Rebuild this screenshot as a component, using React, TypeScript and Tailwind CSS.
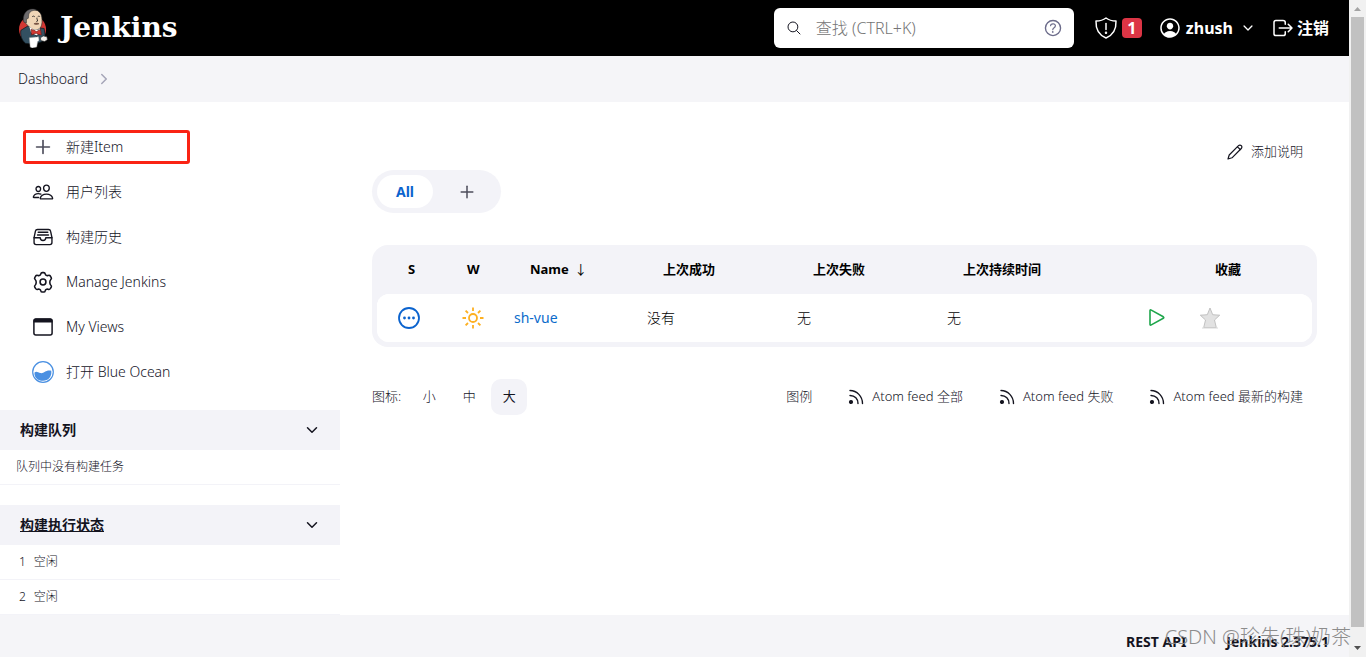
import type { ReactNode } from "react";
import { Plus } from "lucide-react";
import {
  IoChevronDown,
  IoChevronForward,
  IoFileTrayFullOutline,
  IoHelpCircleOutline,
  IoLogOutOutline,
  IoPeopleOutline,
  IoPersonCircleOutline,
  IoSearchOutline,
} from "react-icons/io5";

function JenkinsLogo() {
  return (
    <svg viewBox="1 0 32 43" className="h-10 w-[30px]" aria-hidden="true">
      <circle cx="16.5" cy="23" r="14.5" fill="#d33833" />
      <path d="M4 24l8-5 9 2 8 1 1 8-3 6-9 3-9-1c-4-3-6-9-5-14z" fill="#335061" stroke="#10191f" strokeWidth="0.8" />
      <path d="M7.5 14C6 7 10 2 16 1.500c7 0 10 4 10.500 9 .5 5 .5 9-3 12-3 2-7 1-9-1-2.500-2-5-4-7-7.500z" fill="#f0d6b7" stroke="#2b2b2b" strokeWidth="0.7" />
      <path d="M7 15C5.500 8 9 1.500 16 1c2.500 0 4 .5 5 1.500-4-.5-7.500 1-8.500 4L12 11l-2 1v4z" fill="#6d6b6d" stroke="#222" strokeWidth="0.5" />
      <path d="M16 9.500c1-1 2-1 3 0M22 9.500c1-1 2-1 2.500 0M21 10.500l1 3.500-1.500.5" fill="none" stroke="#222" strokeWidth="0.9" />
      <path d="M18 17c1.500-1 4-1 5.500 0-1.500.8-4 1.200-5.500 0z" fill="#8a5a44" stroke="#49302a" strokeWidth="0.5" />
      <path d="M13 20l4 3 6 .5 1-2 1 4-4 4-6-3z" fill="#fff" />
      <path d="M15 23l4.500 1.500 1 1 4.500-2.500 1 6-4.500-1-1-1-5 2z" fill="#d33833" stroke="#6d1713" strokeWidth="0.7" />
      <path d="M20 29l2 4" stroke="#10191f" strokeWidth="0.8" />
      <path d="M13 32l10-1 .5 4-1.500 1-1 6-5 1-2-1z" fill="#fff" stroke="#999" strokeWidth="0.5" />
      <path d="M25 32l3-2 4 1 .5 3-3 2-4-1z" fill="#f5f1ec" stroke="#222" strokeWidth="0.6" />
    </svg>
  );
}

function ShieldIcon() {
  return (
    <svg viewBox="0 0 24 24" className="size-6" fill="none" stroke="currentColor" strokeWidth="1.500" strokeLinecap="round" strokeLinejoin="round" aria-hidden="true">
      <path d="M12 2c2.500 1.900 6 3 10 3.100.4 8.900-3.200 14-10 16.900C5.200 19.100 1.600 14 2 5.100 6 5 9.500 3.900 12 2z" />
      <path d="M12 7.500v6" />
      <circle cx="12" cy="16.700" r="0.500" fill="currentColor" />
    </svg>
  );
}

function GearIcon() {
  return (
    <svg viewBox="0 0 24 24" className="size-[22px]" fill="none" stroke="currentColor" strokeWidth="1.700" strokeLinejoin="round" aria-hidden="true">
      <path d="M9.600 3.200Q9.900 1.800 11.200 1.800h1.600q1.300 0 1.600 1.400c.3 1.400 1.700 2.200 3.100 1.700q1.700-.6 2.500.6l1 1.700q.7 1.200-.6 2.300c-1.300 1.200-1.300 4.600 0 5.800q1.300 1.100.6 2.300l-1 1.700q-.8 1.200-2.500.6c-1.400-.5-2.800.3-3.100 1.700q-.3 1.400-1.600 1.400h-1.600q-1.300 0-1.600-1.400c-.3-1.400-1.700-2.200-3.100-1.700q-1.700.6-2.500-.6l-1-1.700q-.7-1.200.6-2.300c1.300-1.200 1.300-4.600 0-5.800q-1.300-1.100-.6-2.300l1-1.700q.8-1.200 2.500-.6c1.400.5 2.800-.3 3.100-1.700z" />
      <circle cx="12" cy="12" r="3.200" />
    </svg>
  );
}

function WindowIcon() {
  return (
    <svg viewBox="0 0 22 22" className="size-[22px]" aria-hidden="true">
      <rect x="1.900" y="2.900" width="18.200" height="16.200" rx="2" fill="none" stroke="currentColor" strokeWidth="1.500" />
      <path d="M1.500 6.500V5a2.500 2.500 0 0 1 2.500-2.500h14A2.500 2.500 0 0 1 20.500 5v1.500z" fill="currentColor" />
    </svg>
  );
}

function BlueOceanIcon() {
  return (
    <svg viewBox="0 0 22 22" className="size-[22px]" aria-hidden="true">
      <circle cx="11" cy="11" r="10.300" fill="#fff" stroke="#4a90e2" strokeWidth="1.200" />
      <path d="M2.500 11.500c2-1.500 3.500 0 6 .6 4 .6 5.500-4 10.800-2.300.7 6-3 10-8.300 10s-9-3.300-8.500-8.300z" fill="#4a90e2" />
    </svg>
  );
}

function PencilIcon() {
  return (
    <svg viewBox="0 0 16 16" className="size-4" fill="none" stroke="currentColor" strokeWidth="1.200" strokeLinecap="round" strokeLinejoin="round" aria-hidden="true">
      <path d="M1 15l1.200-4L11.500 1.700a1.900 1.900 0 0 1 2.800 2.800L5 13.800z" />
      <path d="M10.500 2.800l2.700 2.700" />
    </svg>
  );
}

function FeedIcon() {
  return (
    <svg viewBox="0 0 16 16" className="size-4" fill="none" stroke="currentColor" strokeWidth="1.400" strokeLinecap="round" aria-hidden="true">
      <path d="M2 1.500C9 1.500 14.500 7.500 14.500 14.500M2 6.500c5 0 8 3.500 8 8" />
      <circle cx="3" cy="13" r="1.400" fill="currentColor" />
    </svg>
  );
}

function PendingIcon() {
  return (
    <svg viewBox="0 0 22 22" className="size-[22px] text-[#0b63ce]" role="img" aria-label="Not built">
      <circle cx="11" cy="11" r="10" fill="none" stroke="currentColor" strokeWidth="1.800" />
      <circle cx="6.500" cy="11" r="1.400" fill="currentColor" />
      <circle cx="11" cy="11" r="1.400" fill="currentColor" />
      <circle cx="15.500" cy="11" r="1.400" fill="currentColor" />
    </svg>
  );
}

function SunIcon() {
  return (
    <svg viewBox="0 0 22 22" className="size-[22px] text-[#fdb022]" fill="none" stroke="currentColor" strokeWidth="1.800" role="img" aria-label="100%">
      <circle cx="11" cy="11" r="4" />
      <path d="M11 .5v3.500M11 18v3.500M.5 11H4M18 11h3.500M3.600 3.600L6 6M16 16l2.400 2.400M3.600 18.400L6 16M16 6l2.400-2.400" />
    </svg>
  );
}

function PlayIcon() {
  return (
    <svg viewBox="0 0 18 20" className="h-5 w-[18px]" fill="none" stroke="currentColor" strokeWidth="1.600" strokeLinejoin="round" aria-hidden="true">
      <path d="M2 2.800v13.400q0 1.400 1.300.7l12-6.600q1-.8 0-1.500L3.300 2.100Q2 1.400 2 2.800z" />
    </svg>
  );
}

function StarIcon() {
  return (
    <svg viewBox="0 0 22 22" className="size-[22px]" aria-hidden="true">
      <path d="M11 1l2.700 6.700 7 .5-5.200 4.800 1.800 7.500H4.700L6.500 13 1.300 8.200l7-.5z" fill="#e2e2e2" stroke="#b5b5b5" strokeWidth="0.800" strokeLinejoin="round" />
      <path d="M3 21h16" stroke="#d8d8d8" />
    </svg>
  );
}

interface Task {
  label: string;
  icon: ReactNode;
  highlighted?: boolean;
}

const TASKS: Task[] = [
  { label: "新建Item", icon: <Plus className="size-[22px] text-[#4d4d5b]" strokeWidth={1.8} />, highlighted: true },
  { label: "用户列表", icon: <IoPeopleOutline className="size-[22px]" /> },
  { label: "构建历史", icon: <IoFileTrayFullOutline className="size-[22px]" /> },
  { label: "Manage Jenkins", icon: <GearIcon /> },
  { label: "My Views", icon: <WindowIcon /> },
  { label: "打开 Blue Ocean", icon: <BlueOceanIcon /> },
];

const FEEDS = ["Atom feed 全部", "Atom feed 失败", "Atom feed 最新的构建"];

function Header() {
  return (
    <header className="flex h-14 items-center bg-black pr-5 pl-[18px] text-white">
      <a href="#" className="flex items-center gap-3">
        <JenkinsLogo />
        <span className="font-['DejaVu_Serif',serif] text-[28px] leading-8 font-bold">Jenkins</span>
      </a>
      <div className="ml-auto flex h-10 w-[300px] items-center rounded-md bg-white pr-2.5 pl-3 text-[#14141f]">
        <IoSearchOutline className="size-4 shrink-0" />
        <input
          type="search"
          aria-label="查找"
          placeholder="查找 (CTRL+K)"
          className="ml-3.5 min-w-0 flex-1 bg-transparent text-base outline-none placeholder:text-[#757575]"
        />
        <a href="#" aria-label="Help" className="text-[#6b6b8a]">
          <IoHelpCircleOutline className="size-[22px]" />
        </a>
      </div>
      <a href="#" className="ml-5 flex items-center gap-1 font-bold">
        <ShieldIcon />
        <span className="flex size-5 items-center justify-center rounded bg-[#dc3545] text-base">1</span>
      </a>
      <a href="#" className="ml-4 flex items-center gap-1 font-bold">
        <IoPersonCircleOutline className="size-6" />
        zhush
      </a>
      <button type="button" aria-label="User menu" className="ml-2">
        <IoChevronDown className="size-3.5" />
      </button>
      <a href="#" className="ml-4 flex items-center gap-0.5 font-bold">
        <IoLogOutOutline className="size-6" />
        注销
      </a>
    </header>
  );
}

function PaneHeader({ title, underlined }: { title: string; underlined?: boolean }) {
  return (
    <div className="flex h-10 items-center justify-between bg-[#f3f3f8] px-5">
      <h2 className="text-sm font-bold">
        {underlined ? <a href="#" className="underline">{title}</a> : title}
      </h2>
      <button type="button" aria-label={title}>
        <IoChevronDown className="size-4" />
      </button>
    </div>
  );
}

function Sidebar() {
  return (
    <aside className="w-[340px] shrink-0 pt-[22px]">
      <nav>
        {TASKS.map((task) => (
          <a key={task.label} href="#" className="relative flex h-[45px] items-center gap-3 pl-8 text-sm">
            <span className="flex w-[22px] justify-center">{task.icon}</span>
            {task.label}
            {task.highlighted && (
              <span className="absolute top-1.5 left-[23px] h-[34px] w-[167px] rounded-[3px] border-3 border-[#fa2314]" />
            )}
          </a>
        ))}
      </nav>
      <section className="mt-4">
        <PaneHeader title="构建队列" />
        <p className="h-[35px] border-b border-[#f3f3f8] pl-4 text-xs leading-[34px]">队列中没有构建任务</p>
      </section>
      <section className="mt-5">
        <PaneHeader title="构建执行状态" underlined />
        <ul>
          {[1, 2].map((n) => (
            <li key={n} className="flex h-[35px] gap-2 border-b border-[#f3f3f8] pl-[19px] text-xs leading-[34px]">
              <span>{n}</span>
              <span>空闲</span>
            </li>
          ))}
        </ul>
      </section>
    </aside>
  );
}

function JobTable() {
  return (
    <div className="mt-8 rounded-2xl bg-[#f3f3f8] px-[5px] pb-[5px]">
      <table className="w-full table-fixed border-separate border-spacing-0 text-left text-sm text-black">
        <colgroup>
          <col className="w-16" />
          <col className="w-[57px]" />
          <col className="w-[133px]" />
          <col className="w-[150px]" />
          <col className="w-[150px]" />
          <col />
          <col className="w-[51px]" />
          <col className="w-[129px]" />
        </colgroup>
        <thead>
          <tr className="h-[49px] text-[13px]">
            <th className="pl-[31px]">S</th>
            <th className="pl-[26px]">W</th>
            <th className="pl-8">
              Name <span className="ml-0.5 font-normal">↓</span>
            </th>
            <th className="pl-8">上次成功</th>
            <th className="pl-8">上次失败</th>
            <th className="pl-8">上次持续时间</th>
            <th />
            <th className="pl-8">收藏</th>
          </tr>
        </thead>
        <tbody>
          <tr className="h-12 bg-white">
            <td className="rounded-l-xl bg-white pl-[21px]"><PendingIcon /></td>
            <td className="pl-[21px]"><SunIcon /></td>
            <td className="pl-4">
              <a href="#" className="font-normal text-[#0b6bcb]">sh-vue</a>
            </td>
            <td className="pl-4">没有</td>
            <td className="pl-4">无</td>
            <td className="pl-4">无</td>
            <td className="pl-4">
              <button type="button" aria-label="Build sh-vue" className="block text-[#1ea64b]">
                <PlayIcon />
              </button>
            </td>
            <td className="rounded-r-xl bg-white pl-4">
              <button type="button" aria-label="收藏 sh-vue" className="block"><StarIcon /></button>
            </td>
          </tr>
        </tbody>
      </table>
    </div>
  );
}

function Main() {
  return (
    <main className="min-w-0 flex-1 px-8 pt-8">
      <div className="flex justify-end">
        <a href="#" className="flex h-9 items-center gap-2 px-3.5 text-[13px]">
          <PencilIcon />
          添加说明
        </a>
      </div>
      <div className="flex h-[43px] w-fit items-center rounded-full bg-[#f3f3f8] p-[5px]">
        <a href="#" className="flex h-[33px] w-14 items-center justify-center rounded-full bg-white text-sm font-bold text-[#0b63ce]">
          All
        </a>
        <a href="#" aria-label="New view" className="flex w-[63px] justify-center pl-1">
          <Plus className="size-5 text-[#4d4d5b]" strokeWidth={1.8} />
        </a>
      </div>
      <JobTable />
      <div className="mt-8 flex h-9 items-center justify-between text-[13px]">
        <div className="flex items-center gap-1">
          <span className="mr-1.5">图标:</span>
          <a href="#" className="flex size-9 items-center justify-center">小</a>
          <a href="#" className="flex size-9 items-center justify-center">中</a>
          <span className="flex size-9 items-center justify-center rounded-[10px] bg-[#f3f3f8] font-normal">大</span>
        </div>
        <div className="flex items-center gap-2">
          <a href="#" className="px-3.5">图例</a>
          {FEEDS.map((feed) => (
            <a key={feed} href="#" className="flex items-center gap-2 px-3.5">
              <FeedIcon />
              {feed}
            </a>
          ))}
        </div>
      </div>
    </main>
  );
}

function Scrollbar() {
  return (
    <div className="flex w-[17px] shrink-0 flex-col items-center bg-[#f1f1f1]" aria-hidden="true">
      <svg viewBox="0 0 17 17" className="size-[17px]"><path d="M5 11l3.500-4 3.500 4z" fill="#a3a3a3" /></svg>
      <div className="w-[13px] flex-1 bg-[#c1c1c1]" />
      <svg viewBox="0 0 17 30" className="h-[30px] w-[17px]"><path d="M5 19l3.500 4 3.500-4z" fill="#505050" /></svg>
    </div>
  );
}

export default function App() {
  return (
    <div className="flex min-h-screen bg-white font-['Noto_Sans','Noto_Sans_CJK_SC',sans-serif] font-light text-[#14141f]">
      <div className="flex min-w-0 flex-1 flex-col">
        <Header />
        <nav aria-label="Breadcrumb" className="flex h-[46px] items-center gap-2 bg-[#f5f5f8] pl-[18px] text-sm">
          <a href="#">Dashboard</a>
          <IoChevronForward className="size-4 text-[#a5a5b8]" />
        </nav>
        <div className="flex flex-1">
          <Sidebar />
          <Main />
        </div>
        <footer className="relative flex justify-end gap-10 bg-[#f5f5f8] pt-[17px] pr-5 pb-[5px] text-sm font-bold">
          <a href="#">REST API</a>
          <a href="#">Jenkins 2.375.1</a>
          <span className="pointer-events-none absolute -right-0.5 bottom-1.5 text-xl leading-7 font-light text-[#8c8c8c]">
            CSDN @珍朱(珠)奶茶
          </span>
        </footer>
      </div>
      <Scrollbar />
    </div>
  );
}
